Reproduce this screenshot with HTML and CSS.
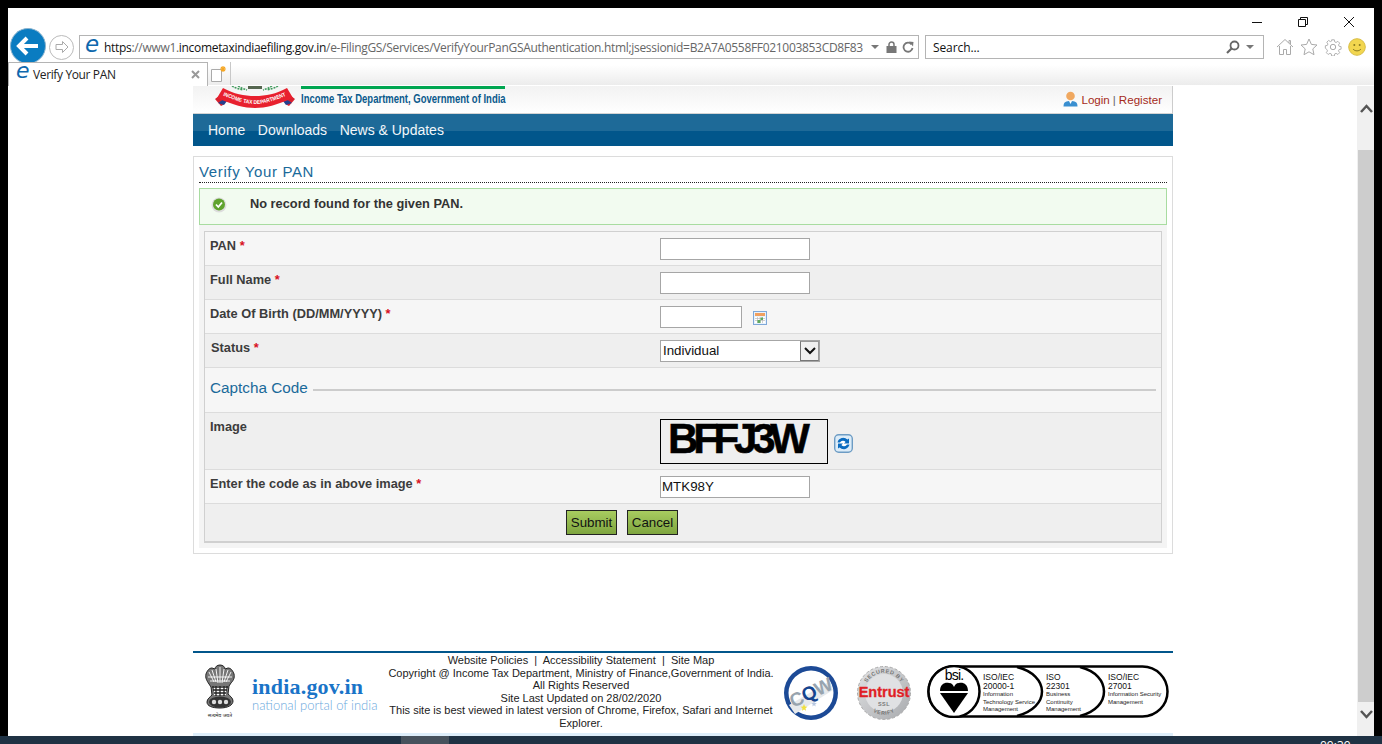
FILE: index.html
```html
<!DOCTYPE html>
<html lang="en">
<head>
<meta charset="utf-8">
<title>Verify Your PAN</title>
<link rel="stylesheet" href="styles.css">
</head>
<body>
<div class="screen">
  <div class="window">
    <div class="chrome">
      <div class="controls">
        <svg class="ctl" width="12" height="12" viewBox="0 0 12 12"><path d="M1 6.500h10" stroke="#111" fill="none"/></svg>
        <svg class="ctl" width="12" height="12" viewBox="0 0 12 12"><path d="M1.500 3.500h7v7h-7zM3.500 3.500v-2h7v7h-2" stroke="#111" fill="none"/></svg>
        <svg class="ctl" width="12" height="12" viewBox="0 0 12 12"><path d="M1 1l10 10M11 1L1 11" stroke="#111" fill="none"/></svg>
      </div>
      <div class="navrow">
        <div class="back"><svg width="24" height="22" viewBox="0 0 24 22"><path d="M11 3L3 11l8 8M3 11h19" stroke="#fff" stroke-width="4" fill="none"/></svg></div>
        <div class="forward"><svg width="16" height="14" viewBox="0 0 16 14"><path d="M8.500 1.500L14 7l-5.500 5.500V9.500H2v-5h6.500z" stroke="#aaa" fill="none"/></svg></div>
        <div class="address">
          <span class="ie ie-addr">e</span>
          <span class="url"><b>https</b>://www1.<b>incometaxindiaefiling.gov.in</b>/e-FilingGS/Services/VerifyYourPanGSAuthentication.html;jsessionid=B2A7A0558FF021003853CD8F83</span>
          <span class="caret"></span>
          <svg class="lock" width="11" height="12" viewBox="0 0 11 12"><path d="M3 5V3.500a2.500 2.500 0 0 1 5 0V5" stroke="#777" stroke-width="1.500" fill="none"/><rect x="0.500" y="5" width="10" height="7" fill="#777"/></svg>
          <svg class="reload" width="12" height="12" viewBox="0 0 12 12"><path d="M9.500 3.300A4.500 4.500 0 1 0 10.500 7" stroke="#777" stroke-width="1.800" fill="none"/><path d="M7 .5l4.500.5-.5 4.500z" fill="#777"/></svg>
        </div>
        <div class="search">
          <span class="search-text">Search...</span>
          <svg width="14" height="14" viewBox="0 0 14 14"><circle cx="8.500" cy="5.500" r="4" stroke="#666" stroke-width="1.800" fill="none"/><path d="M5.500 8.500L1 13" stroke="#666" stroke-width="2.200"/></svg>
          <span class="caret"></span>
        </div>
        <div class="tools">
          <svg width="18" height="18" viewBox="0 0 18 18"><path d="M1 9l8-7.500L17 9M3.500 8v8.500h4v-5h3v5h4V8M13 5V2.500h1.500V6.500" stroke="#aaa" fill="none"/></svg>
          <svg width="18" height="18" viewBox="0 0 18 18"><path d="M9 1l2.400 5.400 5.600.6-4.200 3.900 1.200 5.800L9 13.800 4 16.700l1.200-5.800L1 7l5.600-.6z" stroke="#aaa" fill="none"/></svg>
          <svg width="18" height="18" viewBox="0 0 18 18"><circle cx="9" cy="9" r="2.700" stroke="#aaa" fill="none"/><path d="M7.500 1h3l.4 2.300 1.500.7 2-1.300 2 2-1.300 2 .7 1.500 2.200.4v2.800l-2.200.4-.7 1.500 1.300 2-2 2-2-1.300-1.500.7-.4 2.300h-3l-.4-2.300-1.500-.7-2 1.300-2-2 1.300-2-.7-1.500L.5 10.400V7.600l2.200-.4.7-1.500-1.300-2 2-2 2 1.300 1.500-.7z" transform="translate(.9 .9) scale(.9)" stroke="#aaa" fill="none"/></svg>
          <svg width="18" height="18" viewBox="0 0 18 18"><circle cx="9" cy="9" r="8.300" fill="#f2d64f" stroke="#d8bd45"/><circle cx="6.300" cy="7" r="1" fill="#8a7a20"/><circle cx="11.700" cy="7" r="1" fill="#8a7a20"/><path d="M5 11c2 2.500 6 2.500 8 0" stroke="#8a7a20" fill="none"/></svg>
        </div>
      </div>
      <div class="tabrow">
        <div class="tab">
          <span class="ie ie-tab">e</span>
          <span class="tab-title">Verify Your PAN</span>
          <svg class="tab-x" width="9" height="9" viewBox="0 0 9 9"><path d="M1 1l7 7M8 1L1 8" stroke="#999" stroke-width="2"/></svg>
        </div>
        <div class="newtab"><svg width="18" height="18" viewBox="0 0 18 18"><path d="M1.500 4.500h10v12h-10z" fill="#fff" stroke="#aaa"/><path d="M13 1v6M10 4h6M11 2l4 4M15 2l-4 4" stroke="#f5a623" stroke-width="1.200"/></svg></div>
      </div>
    </div>

    <div class="viewport">
      <div class="page-scroll">
        <div class="page">
          <header class="site-head">
            <div class="brand">
              <svg class="ribbon" width="82" height="24" viewBox="0 0 82 24">
                <path d="M18 0c3 2 7 3 11 4M64 0c-3 2-7 3-11 4M24 0c3 2 6 3 9 4M58 0c-3 2-6 3-9 4" stroke="#3d9a5a" stroke-width="1.500" stroke-dasharray="2 1" fill="none"/>
                <path d="M34 0h14v3H34z" fill="#55664f"/>
                <path d="M1 13l4-3 8 4-4 5-2 1z" fill="#d8202e"/>
                <path d="M81 13l-4-3-8 4 4 5 2 1z" fill="#d8202e"/>
                <path d="M4 17l6-4 3 2-3 4z" fill="#23408e"/>
                <path d="M78 17l-6-4-3 2 3 4z" fill="#23408e"/>
                <path d="M9 2C20 8 30 10 41 10S62 8 73 2l6 10C62 19 52 22 41 22S20 19 3 12z" fill="#e8202e"/>
                <path id="ribbon-curve" d="M8 9C22 15 32 18 41 18S60 15 74 9" fill="none"/>
                <text class="ribbon-text"><textPath href="#ribbon-curve" startOffset="1" textLength="66" lengthAdjust="spacingAndGlyphs">INCOME TAX DEPARTMENT</textPath></text>
              </svg>
              <div class="dept"><span class="dept-name">Income Tax Department, Government of India</span></div>
            </div>
            <div class="login">
              <svg width="15" height="16" viewBox="0 0 15 16"><circle cx="7.500" cy="5" r="4.300" fill="#f0a860"/><path d="M0.500 15.500c0-5 3-5.500 7-5.500s7 .5 7 5.500z" fill="#3a8fd0"/><path d="M6 10l1.500 3 1.500-3z" fill="#fff"/></svg>
              <a class="login-link">Login</a><span class="sep">|</span><a class="login-link">Register</a>
            </div>
          </header>
          <nav class="site-nav">
            <a>Home</a><a>Downloads</a><a>News &amp; Updates</a>
          </nav>

          <section class="panel">
            <h1 class="panel-title">Verify Your PAN</h1>
            <div class="panel-body">
              <div class="message">
                <svg width="16" height="16" viewBox="0 0 16 16"><circle cx="8" cy="8" r="7.500" fill="#ddd"/><circle cx="8" cy="7.500" r="6" fill="#5fa32e"/><path d="M5 7.500l2.300 2.500L11 5.500" stroke="#fff" stroke-width="1.800" fill="none"/></svg>
                <strong class="message-text">No record found for the given PAN.</strong>
              </div>
              <div class="form">
                <div class="row odd"><label class="lbl">PAN <i>*</i></label><div class="field"><span class="input"></span></div></div>
                <div class="row even"><label class="lbl">Full Name <i>*</i></label><div class="field"><span class="input"></span></div></div>
                <div class="row odd"><label class="lbl">Date Of Birth (DD/MM/YYYY) <i>*</i></label>
                  <div class="field">
                    <span class="input input-date"></span>
                    <svg class="cal" width="14" height="14" viewBox="0 0 14 14"><rect x=".5" y=".5" width="13" height="13" fill="#e8f2fc" stroke="#7fa8d8"/><rect x="2" y="2" width="10" height="3" fill="#f0a060"/><path d="M2 6h10v6H2z" fill="#fff"/><path d="M2 7.500h10M2 9.500h10M4.500 6v6M7 6v6M9.500 6v6" stroke="#bbb" stroke-width=".7"/><rect x="4.500" y="9" width="3" height="3" fill="#5fa85f"/><rect x="7.500" y="6.500" width="2.500" height="2.500" fill="#5fa85f"/></svg>
                  </div>
                </div>
                <div class="row even"><label class="lbl lbl-status">Status <i>*</i></label>
                  <div class="field">
                    <div class="select"><span class="select-val">Individual</span><span class="select-btn"><svg width="12" height="8" viewBox="0 0 12 8"><path d="M1 1l5 5 5-5" stroke="#111" stroke-width="2" fill="none"/></svg></span></div>
                  </div>
                </div>
                <div class="row odd captcha-head"><span class="captcha-title">Captcha Code</span><span class="rule"></span></div>
                <div class="row even row-image"><label class="lbl">Image</label>
                  <div class="field field-image">
                    <div class="captcha-img">BFFJ3W</div>
                    <svg class="refresh" width="19" height="19" viewBox="0 0 19 19"><rect x=".7" y=".7" width="17.600" height="17.600" rx="4" fill="#dcecf8" stroke="#6d9cc4" stroke-width="1.400"/><circle cx="9.500" cy="9.500" r="6" fill="#fff"/><path d="M3.500 8.500a6 6 0 0 1 10-3l1.500-1v5h-5l1.600-1.500a3.500 3.500 0 0 0-5.600 .5z" fill="#0b6cc0"/><path d="M15.500 10.500a6 6 0 0 1-10 3l-1.500 1v-5h5l-1.600 1.500a3.500 3.500 0 0 0 5.600-.5z" fill="#0b6cc0"/></svg>
                  </div>
                </div>
                <div class="row odd"><label class="lbl">Enter the code as in above image <i>*</i></label><div class="field"><span class="input input-code">MTK98Y</span></div></div>
                <div class="row even row-buttons"><button class="btn" type="button">Submit</button><button class="btn" type="button">Cancel</button></div>
              </div>
            </div>
          </section>

          <footer class="site-foot">
            <div class="foot-logos">
              <svg class="emblem" width="32" height="56" viewBox="0 0 32 56">
                <path d="M16 1c3 0 5 2 5 4l3-1c3 0 5 3 6 6 1 4-1 7-3 9l-2 3-1 8c2 2 5 4 5 7 0 4-5 7-13 7S3 42 3 38c0-3 3-5 5-7l-1-8-2-3C3 17 1 14 2 10c1-3 3-6 6-6l3 1c0-2 2-4 5-4z" fill="#777" stroke="#222"/>
                <path d="M5 8l5 10M8 6l4 12M12 5l2 14M16 3v16M20 5l-2 14M24 6l-4 12M27 8l-5 10M4 13h24M6 17h20" stroke="#fff" stroke-width=".9" fill="none"/>
                <path d="M10 22h12v9H10z" fill="#fff"/>
                <path d="M8 23h16M9 26h14M10 29h12M12 22v10M16 22v10M20 22v10" stroke="#222" stroke-width="1.300" fill="none"/>
                <ellipse cx="16" cy="38" rx="11" ry="5.500" fill="#333"/>
                <circle cx="10" cy="38" r="2.200" fill="#ddd"/><circle cx="16" cy="38" r="2.200" fill="#ddd"/><circle cx="22" cy="38" r="2.200" fill="#ddd"/>
                <text class="emblem-text" x="16" y="53" text-anchor="middle">सत्यमेव जयते</text>
              </svg>
              <div class="india">
                <span class="india-main">india.gov.in</span>
                <span class="india-sub">national portal of india</span>
              </div>
            </div>
            <div class="foot-text">
              <p class="foot-links"><a>Website Policies</a> &nbsp;|&nbsp; <a>Accessibility Statement</a> &nbsp;|&nbsp; <a>Site Map</a></p>
              <p>Copyright @ Income Tax Department, Ministry of Finance,Government of India.</p>
              <p>All Rights Reserved</p>
              <p>Site Last Updated on 28/02/2020</p>
              <p>This site is best viewed in latest version of Chrome, Firefox, Safari and Internet Explorer.</p>
            </div>
            <div class="foot-badges">
              <svg width="56" height="56" viewBox="0 0 56 56">
                <circle cx="28" cy="28" r="27" fill="#1c4a96"/>
                <circle cx="28" cy="28" r="22.500" fill="#fff"/>
                <path d="M6 40L47 16l3 9-38 24z" fill="#e6e9ec"/>
                <text class="cqw" x="28" y="34" text-anchor="middle" transform="rotate(-25 28 28)">C<tspan class="cqw-q">Q</tspan>W</text>
                <path d="M21 39l1 2.500 2.500.3-2 1.500.6 2.500-2.100-1.400-2.100 1.400.6-2.500-2-1.500 2.500-.3z" fill="#f0e040"/>
                <path d="M31 36l.8 2 2 .2-1.600 1.200.5 2-1.700-1.100-1.700 1.100.5-2-1.600-1.200 2-.2z" fill="#b8c8e0"/>
              </svg>
              <svg width="56" height="56" viewBox="0 0 56 56">
                <defs><linearGradient id="silver" x1="0" y1="0" x2="1" y2="1"><stop offset="0" stop-color="#e2e3e5"/><stop offset="1" stop-color="#a8aaad"/></linearGradient></defs>
                <circle cx="28" cy="28" r="26.500" fill="url(#silver)" stroke="#aaa" stroke-dasharray="3 2"/>
                <circle cx="28" cy="28" r="19" fill="#e0e1e3"/>
                <path id="ent-top" d="M8 28a20 20 0 0 1 40 0" fill="none"/>
                <path id="ent-bot" d="M9 36a20 20 0 0 0 38 0" fill="none"/>
                <text class="ent-small"><textPath href="#ent-top" startOffset="50%" text-anchor="middle">SECURED BY</textPath></text>
                <text class="ent-main" x="28" y="32" text-anchor="middle">Entrust</text>
                <text class="ent-small" x="28" y="41" text-anchor="middle">SSL</text>
                <text class="ent-small"><textPath href="#ent-bot" startOffset="50%" text-anchor="middle">VERIFY</textPath></text>
              </svg>
              <svg class="bsi" width="242" height="53" viewBox="0 0 242 53">
                <rect x="1.500" y="1.500" width="239" height="50" rx="25" fill="#fff" stroke="#000" stroke-width="2.500"/>
                <path d="M90 2C106 6 115 16 115 26.500S106 47 90 51M153 2C169 6 177 16 177 26.500S169 47 153 51" stroke="#000" stroke-width="2.500" fill="none"/>
                <circle cx="27" cy="26.500" r="25.500" fill="#fff" stroke="#000" stroke-width="2.500"/>
                <text class="bsi-logo" x="27" y="15" text-anchor="middle">bsi.</text>
                <path d="M13 26c0-7 5-9 9-8 3 0 4 2 5 4 1-2 2-4 5-4 4-1 9 1 9 8z" fill="#000"/>
                <path d="M13 28h28L27 48z" fill="#000"/>
                <text class="iso" x="56" y="15">ISO/IEC</text><text class="iso" x="56" y="24">20000-1</text>
                <text class="iso-s" x="56" y="31">Information</text><text class="iso-s" x="56" y="39">Technology Service</text><text class="iso-s" x="56" y="46">Management</text>
                <text class="iso" x="119" y="15">ISO</text><text class="iso" x="119" y="24">22301</text>
                <text class="iso-s" x="119" y="31">Business</text><text class="iso-s" x="119" y="39">Continuity</text><text class="iso-s" x="119" y="46">Management</text>
                <text class="iso" x="181" y="15">ISO/IEC</text><text class="iso" x="181" y="24">27001</text>
                <text class="iso-s" x="181" y="31">Information Security</text><text class="iso-s" x="181" y="39">Management</text>
              </svg>
            </div>
          </footer>
          <div class="foot-strip"></div>
        </div>
      </div>
      <div class="scrollbar">
        <div class="sb-btn sb-up"><svg width="13" height="9" viewBox="0 0 13 9"><path d="M1 8l5.500-6L12 8" stroke="#555" stroke-width="2.500" fill="none"/></svg></div>
        <div class="sb-thumb"></div>
        <div class="sb-btn sb-down"><svg width="13" height="9" viewBox="0 0 13 9"><path d="M1 1l5.500 6L12 1" stroke="#555" stroke-width="2.500" fill="none"/></svg></div>
      </div>
    </div>
  </div>
  <div class="taskbar"><span class="task-item"></span><span class="clock">09:39</span></div>
</div>
</body>
</html>
```

FILE: styles.css
```css
* { box-sizing: border-box; }
html, body { margin: 0; padding: 0; height: 100%; overflow: hidden; background: #000; }
body { font-family: "Liberation Sans", Arial, sans-serif; }
p, h1 { margin: 0; }

.screen { width: 1382px; height: 744px; padding-top: 8px; display: flex; flex-direction: column; background: #000; overflow: hidden; }
.window { width: 1366px; height: 728px; margin-left: 8px; background: #fff; display: flex; flex-direction: column; flex: none; }

/* browser chrome */
.chrome { height: 77px; flex: none; display: flex; flex-direction: column; font-family: "Open Sans", "Noto Sans", sans-serif; }
.controls { height: 27px; display: flex; justify-content: flex-end; align-items: center; padding: 1px 19px 0 0; gap: 34px; flex: none; }
.ctl { flex: none; }
.navrow { height: 24px; display: flex; align-items: center; flex: none; }
.back { width: 36px; height: 36px; border-radius: 50%; margin: -2px 0 0 2px; background: #0a7cc1; border: 1px solid #8cb4cf; display: flex; align-items: center; justify-content: center; flex: none; position: relative; }
.forward { width: 25px; height: 25px; border-radius: 50%; border: 1px solid #bbb; margin: 0 5px 0 3px; display: flex; align-items: center; justify-content: center; flex: none; }
.address { width: 840px; height: 24px; border: 1px solid #b4b4b4; display: flex; align-items: center; padding: 0 5px 0 5px; flex: none; }
.ie { color: #0f68ad; font-family: "DejaVu Sans", sans-serif; font-style: italic; font-weight: 400; line-height: 1; }
.ie-addr { font-size: 23px; width: 19px; margin-top: -6px; flex: none; }
.url { font-size: 12px; color: #666; white-space: nowrap; width: 759px; flex: none; letter-spacing: -0.312px; }
.url b { font-weight: 400; color: #111; }
.caret { width: 0; height: 0; border-left: 4px solid transparent; border-right: 4px solid transparent; border-top: 4px solid #777; flex: none; }
.address .caret { margin-left: 8px; }
.lock { margin-left: 7px; flex: none; }
.reload { margin-left: 5px; flex: none; }
.search { width: 339px; height: 24px; margin-left: 6px; border: 1px solid #b4b4b4; display: flex; align-items: center; padding: 0 9px 0 7px; gap: 4px; flex: none; }
.search-text { flex: 1; font-size: 12px; color: #111; letter-spacing: -0.1px; }
.search .caret { margin-left: 2px; }
.tools { display: flex; align-items: center; gap: 6px; margin-left: 12px; flex: none; }
.tabrow { height: 23px; margin-top: 3px; display: flex; flex: none; background: linear-gradient(#fff 0, #fff 3px, #ececec 100%); }
.tab { width: 200px; height: 24px; background: #fff; border: 1px solid #b4b4b4; border-width: 1px 1px 0 1px; display: flex; align-items: center; padding: 0 7px 0 8px; position: relative; z-index: 1; flex: none; }
.ie-tab { font-size: 22px; width: 17px; margin-top: -7px; margin-left: -1px; flex: none; }
.tab-title { flex: 1; font-size: 12px; color: #222; letter-spacing: -0.37px; }
.tab-x { flex: none; }
.newtab { width: 23px; height: 23px; border: 1px solid #c8c8c8; border-width: 0 1px 0 0; display: flex; align-items: center; justify-content: center; flex: none; }

/* page viewport */
.viewport { flex: 1; min-height: 0; display: flex; border-top: 1px solid #fff; }
.page-scroll { flex: 1; min-width: 0; overflow: hidden; }
.page { width: 980px; margin: 0 auto; height: 100%; display: flex; flex-direction: column; position: relative; left: 0.5px; }
.scrollbar { width: 17px; flex: none; background: #f0f0f0; display: flex; flex-direction: column; padding-left: 1px; }
.sb-btn { display: flex; justify-content: center; flex: none; }
.sb-up { height: 64px; padding-top: 18px; }
.sb-thumb { height: 552px; background: #cdcdcd; flex: none; }
.sb-down { flex: 1; padding-top: 8px; }

.site-head { height: 28px; flex: none; display: flex; justify-content: space-between; background: linear-gradient(#f2f2f2, #fff); border-right: 1px solid #ccc; border-bottom: 1px solid #d4d4d4; padding-left: 21px; }
.brand { display: flex; }
.ribbon { flex: none; }
.ribbon-text { font: 700 5.500px "Liberation Sans", sans-serif; fill: #fff; }
.dept { margin-left: 5px; border-top: 3px solid #00a651; width: 204px; height: 20px; white-space: nowrap; }
.dept-name { display: inline-block; font: 700 12.500px/15px "Liberation Sans", sans-serif; color: #0a5a8c; transform: scaleX(0.76); transform-origin: 0 0; }
.login { display: flex; align-items: center; font-size: 11.600px; color: #a52a1a; padding: 0 10px 0 0; gap: 3px; height: 26px; }
.login-link { color: #a52a1a; }
.sep { color: #666; }

.site-nav { height: 32px; flex: none; background: linear-gradient(#1e6a98 0, #1e6a98 17px, #01568b 17px, #01568b 100%); display: flex; align-items: center; padding: 0 0 0 15px; gap: 12.500px; }
.site-nav a { color: #f2f6fa; font-size: 14px; }

.panel { height: 398px; margin-top: 10px; flex: none; border: 1px solid #dcdcdc; padding: 0 5px 5px; background: #fff; display: flex; flex-direction: column; }
.panel-title { font-size: 15px; line-height: 25px; height: 26px; padding-top: 2px; font-weight: 400; letter-spacing: 0.63px; color: #1a6a9a; border-bottom: 1px dotted #222; }
.panel-body { flex: 1; margin-top: 5px; background: #f4f4f4; display: flex; flex-direction: column; }
.message { height: 37px; flex: none; background: #f2fbf0; border: 1px solid #a8dca0; display: flex; align-items: flex-start; padding: 8px 0 0 11px; gap: 23px; font-size: 12.800px; color: #333; }
.message-text { margin-top: -1px; }
.form { margin: 6px 5px 0; border: 1px solid #d0d0d0; border-bottom: 2px solid #d0d0d0; display: flex; flex-direction: column; font-size: 12.800px; color: #3c3c3c; }
.row { height: 34px; flex: none; display: flex; border-bottom: 1px solid #dcdcdc; padding-left: 5px; }
.row.odd { background: #f6f6f6; }
.row.even { background: #efefef; }
.lbl { width: 450px; flex: none; font-weight: 700; padding-top: 7px; line-height: 14px; }
.lbl i { color: #d8111f; font-style: normal; }
.lbl-status { padding-left: 1px; }
.field { flex: 1; padding-top: 6px; display: flex; align-items: flex-start; }
.input { display: block; width: 150px; height: 22px; border: 1px solid #a6a6a6; background: #fff; line-height: 20px; padding-left: 1px; color: #111; font-size: 13.330px; }
.input-date { width: 82px; }
.cal { margin: 5px 0 0 11px; flex: none; }
.select { width: 160px; height: 22px; border: 1px solid #a6a6a6; background: #fff; display: flex; align-items: stretch; font-size: 13.330px; color: #111; }
.select-val { flex: 1; padding-left: 2px; line-height: 20px; }
.select-btn { width: 19px; flex: none; background: #f0f0f0; border: 1px solid; border-color: #999 #999 #777 #777; display: flex; align-items: center; justify-content: center; }
.captcha-head { height: 45px; align-items: center; padding-left: 5px; padding-right: 5px; gap: 5px; }
.captcha-title { font-size: 15.300px; color: #1a6a9a; white-space: nowrap; padding-bottom: 4px; }
.rule { flex: 1; height: 2px; background: #cccccc; }
.row-image { height: 57px; }
.field-image { padding-top: 6px; }
.captcha-img { width: 168px; height: 45px; border: 1px solid #000; font: 700 42px/37px "Liberation Sans", sans-serif; color: #000; letter-spacing: -5.200px; padding-left: 7px; -webkit-text-stroke: 0.5px #000; white-space: nowrap; }
.refresh { margin: 15px 0 0 6px; flex: none; }
.row-buttons { height: 37px; border-bottom: 0; justify-content: center; align-items: flex-start; padding: 6px 122px 0 0; gap: 10px; }
.btn { height: 25px; width: 51px; padding: 0; border: 1px solid #222; background: linear-gradient(#a8cc60, #7ea53f); font: 400 13.330px "Liberation Sans", sans-serif; color: #111; }

/* footer */
.site-foot { margin-top: 97px; height: 82px; flex: none; border-top: 2px solid #01568b; display: flex; background: #fff; }
.foot-logos { width: 193px; flex: none; display: flex; padding: 11px 0 0 11px; }
.emblem { flex: none; }
.emblem-text { font: 400 5px "Noto Sans", "DejaVu Sans", sans-serif; fill: #222; }
.india { margin: 13px 0 0 16px; display: flex; flex-direction: column; white-space: nowrap; }
.india-main { font: 700 22px/20px "Liberation Serif", serif; color: #1a74c8; letter-spacing: 0.2px; }
.india-sub { font: 300 13px/16px "Lato", "Liberation Sans", sans-serif; color: #6aa8dc; }
.foot-text { width: 394px; flex: none; text-align: center; font-size: 11px; line-height: 12.500px; color: #222; padding-top: 1px; margin-left: -2px; }
.foot-badges { flex: 1; display: flex; align-items: flex-start; padding: 12px 0 0 5px; gap: 17px; }
.cqw { font: 700 19px "Liberation Sans", sans-serif; fill: #98a4ae; letter-spacing: -0.5px; }
.cqw-q { fill: #15448e; }
.ent-small { font: 700 5.500px "Liberation Sans", sans-serif; fill: #777; letter-spacing: 0.5px; }
.ent-main { font: 700 14.500px "Liberation Sans", sans-serif; fill: #e01f26; stroke: #e01f26; stroke-width: 0.3px; }
.bsi { margin-left: -2px; flex: none; }
.bsi-logo { font: 400 14px "Liberation Sans", sans-serif; fill: #000; letter-spacing: -0.8px; }
.iso { font: 400 8.500px "Liberation Sans", sans-serif; fill: #111; }
.iso-s { font: 400 6px "Liberation Sans", sans-serif; fill: #222; }
.foot-strip { height: 3px; flex: none; background: #deeefa; }

.taskbar { height: 8px; flex: none; background: #1f3244; display: flex; overflow: hidden; }
.task-item { display: block; width: 48px; height: 8px; margin-left: 401px; background: #47525d; flex: none; }
.clock { margin-left: 871px; font: 400 12px/12px "Open Sans", sans-serif; color: #fff; margin-top: 4px; }
```
